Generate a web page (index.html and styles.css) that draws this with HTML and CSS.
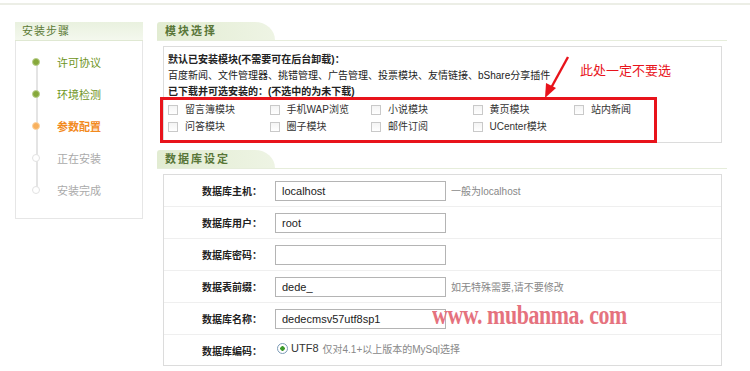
FILE: index.html
```html
<!DOCTYPE html>
<html lang="zh-CN">
<head>
    <meta charset="UTF-8">
    <meta name="viewport" content="width=device-width, initial-scale=1.0">
    <title>安装步骤 - 参数配置</title>
    <link rel="stylesheet" href="styles.css">
</head>
<body>
    <div class="topline"></div>

    <div class="wrap">
        <!-- s左侧步骤 -->
        <div class="side">
            <div class="side-hd">安装步骤</div>
            <ul class="steps">
                <li class="done"><i></i>许可协议</li>
                <li class="done"><i></i>环境检测</li>
                <li class="cur"><i></i>参数配置</li>
                <li><i></i>正在安装</li>
                <li><i></i>安装完成</li>
            </ul>
        </div>
        <!-- e左侧步骤 -->

        <div class="main">
            <div class="sec-hd"><span class="tab">模块选择</span></div>
            <div class="box modules">
                <p class="b">默认已安装模块(不需要可在后台卸载)：</p>
                <p>百度新闻、文件管理器、挑错管理、广告管理、投票模块、友情链接、bShare分享插件</p>
                <p class="b">已下载并可选安装的：(不选中的为未下载)</p>
                <div class="mods">
                    <label><span class="ck"></span>留言簿模块</label>
                    <label><span class="ck"></span>手机WAP浏览</label>
                    <label><span class="ck"></span>小说模块</label>
                    <label><span class="ck"></span>黄页模块</label>
                    <label><span class="ck"></span>站内新闻</label>
                    <label><span class="ck"></span>问答模块</label>
                    <label><span class="ck"></span>圈子模块</label>
                    <label><span class="ck"></span>邮件订阅</label>
                    <label><span class="ck"></span>UCenter模块</label>
                </div>
                <div class="redbox"></div>
            </div>

            <div class="sec-hd"><span class="tab">数据库设定</span></div>
            <div class="box db">
                <div class="row"><span class="lb">数据库主机：</span><span class="ipt">localhost</span><span class="tip">一般为localhost</span></div>
                <div class="row"><span class="lb">数据库用户：</span><span class="ipt">root</span></div>
                <div class="row"><span class="lb">数据库密码：</span><span class="ipt"></span></div>
                <div class="row"><span class="lb">数据表前缀：</span><span class="ipt">dede_</span><span class="tip">如无特殊需要,请不要修改</span></div>
                <div class="row"><span class="lb">数据库名称：</span><span class="ipt">dedecmsv57utf8sp1</span></div>
                <div class="row last"><span class="lb">数据库编码：</span><span class="radio"></span><span class="utf">UTF8</span><span class="tip">仅对4.1+以上版本的MySql选择</span></div>
            </div>
        </div>
    </div>

    <!-- 标注 -->
    <svg class="arrow" width="34" height="50" viewBox="0 0 34 50">
        <line x1="28" y1="5" x2="11" y2="36" stroke="#e8131b" stroke-width="2.4"/>
        <polygon points="5,46 6,31 16,36" fill="#e8131b"/>
    </svg>
    <div class="note">此处一定不要选</div>
    <div class="watermark">www. mubanma. com</div>
</body>
</html>
```

FILE: styles.css
```css
body { margin: 0; background: #fff; font-family: "Liberation Sans", "Noto Sans CJK SC", sans-serif; font-size: 10px; color: #222; }
p { margin: 0; }
ul { margin: 0; padding: 0; list-style: none; }

.topline { height: 3px; border-bottom: 2px solid #eceee6; }

.wrap { display: flex; gap: 14px; padding: 17px 0 0 15px; }

/* 左侧步骤 */
.side { width: 128px; flex: none; }
.side-hd { height: 18px; line-height: 18px; padding-left: 7px; font-size: 11px; letter-spacing: 1px; color: #5b7a35; background: linear-gradient(#e9f1df, #f4f8ee); border-bottom: 1px solid #dfe8d2; }
.steps { position: relative; padding: 6px 0 11px 41px; border: 1px solid #e6e6e6; border-top: none; }
.steps::before { content: ""; position: absolute; left: 20px; top: 23px; bottom: 27px; width: 2px; background: #e4e4e4; }
.steps li { position: relative; height: 32px; line-height: 32px; font-size: 11px; color: #aaa; }
.steps li i { position: absolute; left: -25px; top: 11px; width: 8px; height: 8px; border-radius: 50%; background: #fff; border: 1px solid #e2e2e2; box-sizing: border-box; }
.steps li.done { color: #6e9422; }
.steps li.done i { background: #86a83a; border-color: #b9cf8c; }
.steps li.cur { color: #f28a1e; font-weight: bold; }
.steps li.cur i { background: #f8b05c; border-color: #fbd3a2; }

/* 右侧主体 */
.main { width: 570px; }
.sec-hd { height: 18px; border-bottom: 1px solid #e6eddb; }
.sec-hd .tab { display: inline-block; width: 110px; height: 18px; line-height: 18px; padding-left: 8px; font-size: 11px; font-weight: bold; letter-spacing: 2px; color: #587638; background: linear-gradient(90deg, #e2ecd2, #eef4e4); border-top-right-radius: 20px 18px; border-top-left-radius: 3px; }

.box { border: 1px solid #dcdcdc; margin: 5px 5px 7px 6px; }

.modules { position: relative; padding: 5px 0 7px 4px; line-height: 16px; }
.modules .b { font-weight: bold; }
.mods { display: grid; grid-template-columns: repeat(5, 101.5px); grid-auto-rows: 17px; margin-top: 1px; }
.mods label { display: flex; align-items: center; gap: 7px; color: #333; }
.ck { width: 10px; height: 10px; border: 1px solid #c9c9c9; box-sizing: border-box; background: linear-gradient(#f4f4f4, #fff); }
.redbox { position: absolute; left: -4px; top: 50px; width: 497px; height: 46px; border: 3px solid #e8131b; box-sizing: border-box; }

.db .row { display: flex; align-items: center; height: 31px; border-bottom: 1px solid #efefef; }
.db .row.last { height: 30px; border-bottom: none; }
.lb { width: 98px; padding-right: 13px; text-align: right; font-weight: bold; color: #222; }
.ipt { width: 171px; height: 20px; line-height: 18px; padding-left: 6px; box-sizing: border-box; border: 1px solid #b4b4b4; font-size: 11px; color: #222; }
.tip { margin-left: 5px; color: #888; font-size: 10px; }
.radio { width: 9px; height: 9px; margin: -4px 0 0 2px; border: 1px solid #7d9bb8; border-radius: 50%; background: radial-gradient(circle, #3d9a2b 2px, #fff 2.5px); }
.utf { margin: -4px 0 0 3px; font-size: 11px; color: #333; }
.row.last .tip { margin: -4px 0 0 4px; }

/* 标注 */
.arrow { position: absolute; left: 540px; top: 52px; }
.note { position: absolute; left: 580px; top: 61px; font-size: 13px; line-height: 18px; color: #e8131b; font-family: "Noto Sans CJK SC", sans-serif; }
.watermark { position: absolute; left: 432px; top: 300px; font-family: "Liberation Serif", serif; font-weight: bold; font-size: 27px; letter-spacing: -0.5px; color: #e5727e; transform: scaleX(0.81); transform-origin: left center; }
```
